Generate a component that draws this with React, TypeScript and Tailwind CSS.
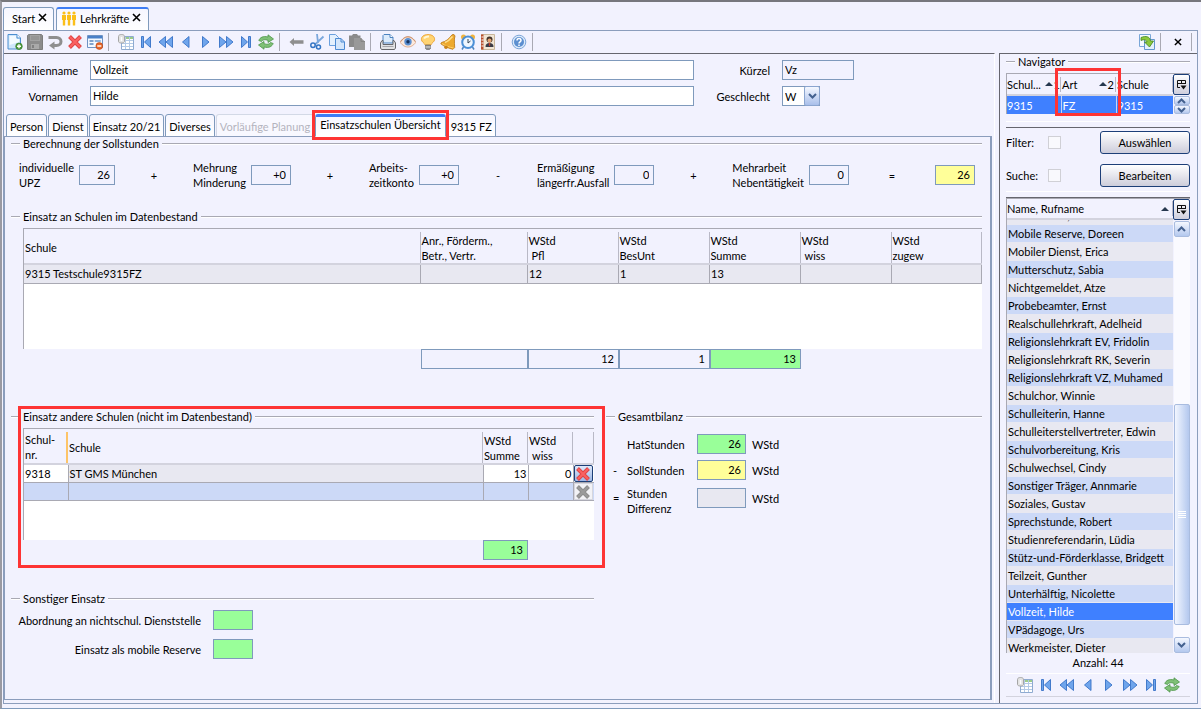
import React, { useState } from "react";

type IconProps = { className?: string };

const schools = [
  { schule: "9315 Testschule9315FZ", anr: "", pfl: "12", besUnt: "1", summe: "13", wiss: "", zugew: "" },
];

const people = [
  "Mobile Reserve, Doreen",
  "Mobiler Dienst, Erica",
  "Mutterschutz, Sabia",
  "Nichtgemeldet, Atze",
  "Probebeamter, Ernst",
  "Realschullehrkraft, Adelheid",
  "Religionslehrkraft EV, Fridolin",
  "Religionslehrkraft RK, Severin",
  "Religionslehrkraft VZ, Muhamed",
  "Schulchor, Winnie",
  "Schulleiterin, Hanne",
  "Schulleiterstellvertreter, Edwin",
  "Schulvorbereitung, Kris",
  "Schulwechsel, Cindy",
  "Sonstiger Träger, Annmarie",
  "Soziales, Gustav",
  "Sprechstunde, Robert",
  "Studienreferendarin, Lüdia",
  "Stütz-und-Förderklasse, Bridgett",
  "Teilzeit, Gunther",
  "Unterhälftig, Nicolette",
  "Vollzeit, Hilde",
  "VPädagoge, Urs",
];

/* ---------- icons ---------- */

function Svg({ children, className = "size-4" }: IconProps & { children: React.ReactNode }) {
  return (
    <svg viewBox="0 0 16 16" className={className} fill="none" aria-hidden="true">
      {children}
    </svg>
  );
}

function NewIcon() {
  return (
    <Svg>
      <path d="M1 .5h9l3.500 3.500v11H1z" fill="#cfe6fb" stroke="#4d8fd0" />
      <path d="M2.500 2h6.500v3h3v3L2.500 11z" fill="#f3faff" />
      <path d="M10 .5v3.500h3.500" fill="#fff" stroke="#4d8fd0" />
      <circle cx="12" cy="12.300" r="3.300" fill="#4f9a3d" stroke="#2f7a28" strokeWidth=".6" />
      <path d="M12 10.300v4M10 12.300h4" stroke="#fff" strokeWidth="1.400" />
    </Svg>
  );
}

function SaveIcon() {
  return (
    <Svg>
      <path d="M1.500.5h13l1 1v14H.5v-14z" fill="#8c8c8c" stroke="#7d7d7d" />
      <path d="M3 1h10v6H3z" fill="#a2a2a2" />
      <path d="M4 3h8M4 5h8" stroke="#8a8a8a" />
      <path d="M4 10h8v5H4z" fill="#a9a9a9" />
      <path d="M5 11h2v3H5z" fill="#808080" />
    </Svg>
  );
}

function UndoIcon() {
  return (
    <Svg>
      <path d="M1.500 3.500h8c6 0 6 8 0 8H6" stroke="#8f8f8f" strokeWidth="3" />
      <path d="M7.500 7.500v8L2 11.500z" fill="#8f8f8f" />
    </Svg>
  );
}

function DeleteIcon({ gray = false }: { gray?: boolean }) {
  return (
    <Svg>
      <path d="M2.500 2.500l11 11M13.500 2.500l-11 11" stroke={gray ? "#8d8d8d" : "#e04444"} strokeWidth="4" />
      <path d="M3 3l10 10M13 3L3 13" stroke={gray ? "#9b9b9b" : "#fb6161"} strokeWidth="2" />
    </Svg>
  );
}

function FormIcon() {
  return (
    <Svg>
      <path d="M.5 1.500h15v12H.5z" fill="#f4f9ff" stroke="#6f93c4" />
      <path d="M1 2h14v2.500H1z" fill="#4a80c8" />
      <path d="M2.500 7h4M2.500 10h4" stroke="#5b86bd" strokeWidth="1.400" />
      <path d="M8 6.500h5.500v1H8z" stroke="#8fb0d8" />
      <circle cx="12.300" cy="12" r="3.400" fill="#e8682b" stroke="#b9400f" strokeWidth=".6" />
      <path d="M10.300 12h4" stroke="#fff" strokeWidth="1.400" />
    </Svg>
  );
}

function TableIcon() {
  return (
    <Svg>
      <path d="M3.500 2.500h12v13h-12z" fill="#fff" stroke="#8fabd0" />
      <path d="M8 3h7v2H8z" fill="#9ccb8a" />
      <path d="M4 6.500h11M4 9.500h11M4 12.500h11M7.500 3v12M11.500 3v12" stroke="#b4cae6" />
      <path d="M.5 2.500C.5 1 2 .5 3.500.5S6.500 1 6.500 2.500v5c0 1-1.500 1.500-3 1.500s-3-.5-3-1.500z" fill="#e2e2e2" stroke="#a5a5a5" />
      <path d="M3.500 3v4" stroke="#fff" strokeWidth="1.500" />
    </Svg>
  );
}

const blueStroke = { fill: "#6fa5ec", stroke: "#3571c6", strokeWidth: 0.9 };

function FirstIcon() {
  return (
    <Svg>
      <path d="M3.500 2.500h2v11h-2z" {...blueStroke} />
      <path d="M12.500 2.500v11L6.500 8z" {...blueStroke} />
    </Svg>
  );
}

function RewindIcon() {
  return (
    <Svg>
      <path d="M7.500 2.500v11L1 8z" {...blueStroke} />
      <path d="M14.500 2.500v11L8 8z" {...blueStroke} />
    </Svg>
  );
}

function PrevIcon() {
  return (
    <Svg>
      <path d="M11 2.500v11L4.500 8z" {...blueStroke} />
    </Svg>
  );
}

function NextIcon() {
  return (
    <Svg>
      <path d="M4.500 2.500v11L11 8z" {...blueStroke} />
    </Svg>
  );
}

function ForwardIcon() {
  return (
    <Svg>
      <path d="M1.500 2.500v11L8 8z" {...blueStroke} />
      <path d="M8.500 2.500v11L15 8z" {...blueStroke} />
    </Svg>
  );
}

function LastIcon() {
  return (
    <Svg>
      <path d="M3.500 2.500v11l6-5.500z" {...blueStroke} />
      <path d="M10.500 2.500h2v11h-2z" {...blueStroke} />
    </Svg>
  );
}

function RefreshIcon() {
  return (
    <Svg>
      <path d="M.8 6.500C2 3.500 5 1.700 10 3V.8L15.500 5 10 8.500V6.300C7 5.300 4.500 5.500 3.500 7.500z" fill="#7fc077" stroke="#4c9648" strokeWidth=".8" />
      <path d="M15.200 9.500c-1.200 3-4.200 4.800-9.200 3.500v2.200L.5 11 6 7.500v2.200c3 1 5.500.8 6.500-1.200z" fill="#7fc077" stroke="#4c9648" strokeWidth=".8" />
    </Svg>
  );
}

function ArrowLeftIcon() {
  return (
    <Svg>
      <path d="M.5 8L5 4v2.300h9.500v3.400H5V12z" fill="#8f8f8f" />
    </Svg>
  );
}

function CutIcon() {
  return (
    <Svg>
      <path d="M8 0L9 9M14.500 2.500L6 10.500" stroke="#7aa7dc" strokeWidth="1.800" />
      <circle cx="4" cy="11.300" r="2.200" stroke="#3274c4" strokeWidth="1.500" />
      <circle cx="9.500" cy="13" r="2" stroke="#3274c4" strokeWidth="1.500" />
    </Svg>
  );
}

function CopyIcon() {
  return (
    <Svg>
      <path d="M.5.5h6l3 3v8h-9z" fill="#e4f0fd" stroke="#6ba0de" />
      <path d="M6.500 4.500h5.500l3.500 3.500v7.500h-9z" fill="#d4e6fb" stroke="#4d8ad2" />
      <path d="M12 4.500V8h3.500" stroke="#4d8ad2" />
    </Svg>
  );
}

function PasteIcon() {
  return (
    <Svg>
      <path d="M0 1.500h3L4 0h4l1 1.500h2.500V13H0z" fill="#8a8a8a" />
      <path d="M5 4h7l4 3.500V16H5z" fill="#999" />
      <path d="M12 4v3.500h4" stroke="#858585" />
    </Svg>
  );
}

function PrinterIcon() {
  return (
    <Svg>
      <path d="M4 .5h6l3 3V9H3V1.500z" fill="#dcebfb" stroke="#4c83c0" />
      <path d="M10 .5v3h3" fill="#fff" stroke="#4c83c0" />
      <path d="M3 6.500H2L.5 9v5l1 1.500h13l1-1.500V9L14 6.500h-1v4H3z" fill="#e2e2e4" stroke="#66666b" />
      <path d="M2.500 12.500h11" stroke="#a5a5ab" />
    </Svg>
  );
}

function EyeIcon() {
  return (
    <Svg>
      <path d="M.3 8.500C3 4 6 3 8 3s5 1 7.700 5.500C13 12 10.500 13 8 13S3 12 .3 8.500z" fill="#fbe9de" stroke="#d9a584" strokeWidth=".9" />
      <circle cx="8" cy="7.800" r="3.700" fill="#5a8fd2" />
      <circle cx="8" cy="7.800" r="1.700" fill="#17335f" />
      <path d="M.5 7.500C3.500 3.500 6 2.700 8 2.700s4.500.8 7.500 4.800" stroke="#c98b63" />
    </Svg>
  );
}

function BulbIcon() {
  return (
    <Svg>
      <path d="M8 .6c4.200 0 6.600 2 6.600 4.700 0 2.700-3.200 3.700-3.800 5.700H5.200C4.600 9 1.400 8 1.400 5.300 1.400 2.600 3.800.6 8 .6z" fill="#ffd473" stroke="#eda63a" />
      <path d="M4 4.500c1-1.700 3-2.200 5-2" stroke="#fff6d6" strokeWidth="2" />
      <path d="M5.500 11h5v3.500l-1 1h-3l-1-1z" fill="#8d8d8d" stroke="#5f5f5f" strokeWidth=".6" />
      <path d="M5.500 13h5" stroke="#dedede" />
    </Svg>
  );
}

function BellIcon() {
  return (
    <Svg>
      <path d="M12 .8l2-.3 1 1.500-.6 3c-.2 3 .3 6 .3 8.500L13 15.300C9 14.500 4 12.300.8 9.800l.7-1.300C6 7.500 9 5 12 .8z" fill="#eda92f" stroke="#b97512" strokeWidth=".8" />
      <path d="M5 8.500c3-1 5.500-3.500 7.500-6" stroke="#ffdf8c" strokeWidth="1.500" />
      <path d="M2 9.500c3 2 7.500 3.800 11.500 4.500" stroke="#ffd06a" />
      <circle cx="6" cy="13.300" r="1.800" fill="#c98218" />
    </Svg>
  );
}

function ClockIcon() {
  return (
    <Svg>
      <path d="M3.500 13L2 15.500M12.500 13l1.500 2.500" stroke="#4b83bf" strokeWidth="1.500" />
      <circle cx="3.500" cy="3" r="2.500" fill="#eeb23e" />
      <circle cx="12.500" cy="3" r="2.500" fill="#eeb23e" />
      <circle cx="8" cy="8.300" r="5.800" fill="#eef6ff" stroke="#4b8fd6" strokeWidth="2" />
      <path d="M8 5v4l2.500-2" stroke="#345" />
    </Svg>
  );
}

function BookIcon() {
  return (
    <Svg>
      <path d="M1.500.5h13v15h-13z" fill="#f1e6d4" stroke="#c9b79b" />
      <path d="M1 .5h2.500v15H1z" fill="#b9502c" />
      <path d="M1.500 3h2M1.500 6h2M1.500 9h2M1.500 12h2" stroke="#fff" />
      <circle cx="9.500" cy="5.500" r="3" fill="#433429" />
      <circle cx="9.500" cy="6.500" r="2" fill="#e3a271" />
      <path d="M5.500 13c0-3 1.500-4 4-4s4 1 4 4z" fill="#3b3b45" />
      <path d="M9.500 9v3" stroke="#c43c2c" strokeWidth="1.200" />
    </Svg>
  );
}

function HelpIcon() {
  return (
    <Svg>
      <circle cx="8" cy="8" r="6.800" fill="#dceafa" stroke="#7ea6d8" />
      <circle cx="8" cy="8" r="5" fill="#5c8fd0" />
      <path d="M6 6.500c0-2.600 4-2.600 4 0 0 1.400-2 1.500-2 3M8 10.500V12" stroke="#fff" strokeWidth="1.500" />
    </Svg>
  );
}

function ExportIcon() {
  return (
    <Svg>
      <path d="M.5.5h11v12H.5z" fill="#f4faff" stroke="#79a6d8" />
      <path d="M5.500 5.500h10v10h-10z" fill="#e3f0fd" stroke="#6496ce" />
      <path d="M2 3.500c5-2 9-1 9.500 3.500h3l-4 6-5-5h2.500C7.500 6 5 5 2 6.500z" fill="#8cc83c" stroke="#3f8420" strokeWidth=".8" />
    </Svg>
  );
}

function PeopleIcon() {
  return (
    <svg viewBox="0 0 16 16" className="h-4 w-4" aria-hidden="true">
      {[3, 8, 13].map((x) => (
        <g key={x} fill="#fbbf1a">
          <circle cx={x} cy="2" r="1.600" />
          <path d={`M${x - 2} 4h4v5h-.8v5.500h-2.400V9h-.8z`} />
        </g>
      ))}
    </svg>
  );
}

function CloseIcon({ className = "size-[9px]" }: IconProps) {
  return (
    <svg viewBox="0 0 9 9" className={className} aria-hidden="true">
      <path d="M1 1l7 7M8 1L1 8" stroke="#000" strokeWidth="1.600" />
    </svg>
  );
}

function ColumnIcon() {
  return (
    <svg viewBox="0 0 11 11" className="size-[11px]" fill="none" aria-hidden="true">
      <path d="M4 8.500H1.500v-7h8V5M1 4.500h9M5.500 1v4" stroke="#111" />
      <path d="M4.500 6.500h6l-3 4z" fill="#111" />
    </svg>
  );
}

function Chevron({ up = false }: { up?: boolean }) {
  return (
    <svg viewBox="0 0 9 6" className="h-[6px] w-[9px] shrink-0" fill="none" aria-hidden="true">
      <path d={up ? "M1 5l3.500-3.500L8 5" : "M1 1l3.500 3.500L8 1"} stroke="#44618f" strokeWidth="2" />
    </svg>
  );
}

function SortMark() {
  return (
    <svg viewBox="0 0 8 4" className="h-1 w-2 shrink-0" aria-hidden="true">
      <path d="M0 4l4-4 4 4z" fill="#26384f" />
    </svg>
  );
}

/* ---------- building blocks ---------- */

function ToolButton({ label, children, wide = false }: { label: string; children: React.ReactNode; wide?: boolean }) {
  return (
    <button
      type="button"
      aria-label={label}
      className={wide ? "flex h-5 w-[21px] items-center justify-center" : "flex h-5 w-5 items-center justify-center"}
    >
      {children}
    </button>
  );
}

function Separator() {
  return (
    <div className="h-[18px] w-[11px] pl-[3px]">
      <div className="h-full w-px bg-[#a9a9b3]" />
    </div>
  );
}

function GroupTitle({ children, className = "" }: { children: React.ReactNode; className?: string }) {
  return (
    <div className={"flex h-[13px] items-center " + className}>
      <div className="h-[2px] w-[9px] border-t border-[#a9a9b3] bg-white" />
      <h2 className="px-[3px]">{children}</h2>
      <div className="h-[2px] flex-1 border-t border-[#a9a9b3] bg-white" />
    </div>
  );
}

const numberInput = "h-5 border border-[#7f9abc] px-1 pb-[2px] text-right outline-none ";

function NumberBox({ label, value, className }: { label: string; value: string; className: string }) {
  return <input aria-label={label} defaultValue={value} className={numberInput + className} />;
}

function HoursField({ lines, value, className }: { lines: string[]; value: string; className: string }) {
  return (
    <label className="flex items-center gap-[5px]">
      <span className="whitespace-nowrap">
        {lines[0]}
        <br />
        {lines[1]}
      </span>
      <input defaultValue={value} className={numberInput + className} />
    </label>
  );
}

function Operator({ children, className = "" }: { children: React.ReactNode; className?: string }) {
  return <span className={"w-2 text-center " + className}>{children}</span>;
}

function HeadCell({ lines, indent = false }: { lines: string[]; indent?: boolean }) {
  return (
    <th className="p-0 text-left align-bottom font-normal">
      <div className="flex h-[31px] flex-col justify-center border-r border-[#b9b9c6] pl-px leading-[15px]">
        <div>{lines[0]}</div>
        {lines[1] && <div className={indent ? "pl-[3px]" : ""}>{lines[1]}</div>}
      </div>
    </th>
  );
}

function ScrollButton({ up = false, small = false }: { up?: boolean; small?: boolean }) {
  return (
    <button
      type="button"
      aria-label={up ? "Nach oben" : "Nach unten"}
      className={
        "flex w-4 shrink-0 items-center justify-center rounded-[2px] border border-[#a9bcdf] bg-linear-to-b from-[#f5f8ff] to-[#b4c8ee] " +
        (small ? "h-[9px]" : "h-4")
      }
    >
      <Chevron up={up} />
    </button>
  );
}

function ColumnButton() {
  return (
    <button
      type="button"
      aria-label="Spalten"
      className="flex h-[21px] w-[17px] items-center justify-center rounded-[2px] border border-[#1d3f78] bg-linear-to-b from-white to-[#cfcfdd]"
    >
      <ColumnIcon />
    </button>
  );
}

function RecordNav({ wide = false }: { wide?: boolean }) {
  return (
    <>
      <ToolButton wide={wide} label="Liste"><TableIcon /></ToolButton>
      <ToolButton wide={wide} label="Erster"><FirstIcon /></ToolButton>
      <ToolButton wide={wide} label="Zurückspulen"><RewindIcon /></ToolButton>
      <ToolButton wide={wide} label="Zurück"><PrevIcon /></ToolButton>
      <ToolButton wide={wide} label="Weiter"><NextIcon /></ToolButton>
      <ToolButton wide={wide} label="Vorspulen"><ForwardIcon /></ToolButton>
      <ToolButton wide={wide} label="Letzter"><LastIcon /></ToolButton>
      <ToolButton wide={wide} label="Aktualisieren"><RefreshIcon /></ToolButton>
    </>
  );
}

/* ---------- page parts ---------- */

function WindowTabs() {
  return (
    <div className="flex h-[27px] items-end gap-[2px] pt-1">
      <div className="flex h-[23px] w-[51px] items-center gap-[3px] rounded-t-[3px] border border-b-0 border-[#7f9abc] bg-linear-to-b from-[#f6f6ff] to-white pb-px pl-2">
        <span>Start</span>
        <button type="button" aria-label="Start schließen" className="pb-[2px]"><CloseIcon /></button>
      </div>
      <div className="-mb-px flex h-6 w-[93px] items-center gap-[3px] rounded-t-[3px] border border-t-2 border-b-0 border-[#7f9abc] border-t-[#3d7cf5] bg-linear-to-b from-[#f6f6ff] to-white pb-[3px] pl-1">
        <PeopleIcon />
        <span>Lehrkräfte</span>
        <button type="button" aria-label="Lehrkräfte schließen" className="pb-[2px]"><CloseIcon /></button>
      </div>
    </div>
  );
}

function Toolbar() {
  return (
    <div className="flex h-[22px] items-center pl-px">
      <ToolButton label="Neu"><NewIcon /></ToolButton>
      <ToolButton label="Speichern"><SaveIcon /></ToolButton>
      <ToolButton label="Rückgängig"><UndoIcon /></ToolButton>
      <ToolButton label="Löschen"><DeleteIcon /></ToolButton>
      <ToolButton label="Formular"><FormIcon /></ToolButton>
      <Separator />
      <RecordNav />
      <Separator />
      <ToolButton label="Vorheriges"><ArrowLeftIcon /></ToolButton>
      <ToolButton label="Ausschneiden"><CutIcon /></ToolButton>
      <ToolButton label="Kopieren"><CopyIcon /></ToolButton>
      <ToolButton label="Einfügen"><PasteIcon /></ToolButton>
      <Separator />
      <ToolButton label="Drucken"><PrinterIcon /></ToolButton>
      <ToolButton label="Vorschau"><EyeIcon /></ToolButton>
      <ToolButton label="Hinweis"><BulbIcon /></ToolButton>
      <ToolButton label="Erinnerung"><BellIcon /></ToolButton>
      <ToolButton label="Termine"><ClockIcon /></ToolButton>
      <ToolButton label="Adressbuch"><BookIcon /></ToolButton>
      <Separator />
      <ToolButton label="Hilfe"><HelpIcon /></ToolButton>
      <Separator />
      <div className="ml-auto flex items-center pr-[5px]">
        <ToolButton label="Exportieren"><ExportIcon /></ToolButton>
        <Separator />
        <button type="button" aria-label="Schließen" className="mr-[3px] flex h-5 w-5 items-center justify-center">
          <CloseIcon className="size-2" />
        </button>
        <div className="h-[18px] w-px bg-[#a9a9b3]" />
      </div>
    </div>
  );
}

function PersonForm() {
  const input = "h-5 border border-[#7f9abc] px-[2px] pb-[2px] outline-none";
  return (
    <div className="flex pt-[6px]">
      <div className="flex flex-1 flex-col gap-[6px]">
        <div className="flex items-center">
          <label htmlFor="familienname" className="w-[74px] text-right">Familienname</label>
          <input id="familienname" defaultValue="Vollzeit" className={input + " ml-3 flex-1 bg-white"} />
        </div>
        <div className="flex items-center">
          <label htmlFor="vornamen" className="w-[74px] text-right">Vornamen</label>
          <input id="vornamen" defaultValue="Hilde" className={input + " ml-3 flex-1 bg-white"} />
        </div>
      </div>
      <div className="flex w-[298px] flex-col gap-[6px]">
        <div className="flex items-center">
          <label htmlFor="kuerzel" className="w-[76px] text-right">Kürzel</label>
          <input id="kuerzel" defaultValue="Vz" className={input + " ml-3 w-[72px] bg-transparent"} />
        </div>
        <div className="flex items-center">
          <label htmlFor="geschlecht" className="w-[76px] text-right">Geschlecht</label>
          <div className="relative ml-3">
            <select id="geschlecht" defaultValue="W" className="block h-5 w-[38px] appearance-none border border-[#7f9abc] bg-white pl-[2px] outline-none">
              <option>W</option>
              <option>M</option>
            </select>
            <div className="pointer-events-none absolute top-0 right-0 flex h-5 w-4 items-center justify-center rounded-[2px] border border-[#8ba5cf] bg-linear-to-b from-[#f5f8ff] to-[#a9bfea]">
              <Chevron />
            </div>
          </div>
        </div>
      </div>
    </div>
  );
}

function DetailTabs({ active, onSelect }: { active: string; onSelect: (tab: string) => void }) {
  const tabs = ["Person", "Dienst", "Einsatz 20/21", "Diverses", "Vorläufige Planung", "Einsatzschulen Übersicht", "9315 FZ"];
  return (
    <div role="tablist" className="-mb-px flex h-[23px] items-end gap-px pl-[2px]">
      {tabs.map((tab) => {
        const disabled = tab === "Vorläufige Planung";
        const button = (
          <button
            key={tab}
            type="button"
            role="tab"
            aria-selected={tab === active}
            disabled={disabled}
            onClick={() => onSelect(tab)}
            className={
              "h-[23px] rounded-t-[3px] border whitespace-nowrap " +
              (tab === active
                ? "border-t-[3px] border-b-white border-x-[#7f9abc] border-t-[#3d7cf5] bg-linear-to-b from-[#f6f6ff] to-white px-1 pb-1"
                : disabled
                  ? "border-[#d3d9e6] border-b-[#7f9abc] bg-[#f8f8ff] px-[3px] pt-[2px] text-[#b4b4be]"
                  : "border-[#7f9abc] bg-linear-to-b from-[#f6f6ff] to-white px-[3px] pt-[2px]")
            }
          >
            {tab}
          </button>
        );
        if (tab !== "Einsatzschulen Übersicht") return button;
        return (
          <div key={tab} className="relative">
            {button}
            <div className="pointer-events-none absolute -inset-x-[3px] -top-1 -bottom-[3px] z-10 border-[3px] border-[#fe3434]" />
          </div>
        );
      })}
    </div>
  );
}

function TargetHours() {
  return (
    <section>
      <GroupTitle>Berechnung der Sollstunden</GroupTitle>
      <div className="mt-[10px] flex items-center justify-between pr-[7px] pl-2 leading-[15px]">
        <HoursField lines={["individuelle", "UPZ"]} value="26" className="w-9" />
        <Operator>+</Operator>
        <HoursField lines={["Mehrung", "Minderung"]} value="+0" className="w-10" />
        <Operator>+</Operator>
        <HoursField lines={["Arbeits-", "zeitkonto"]} value="+0" className="w-10" />
        <Operator>-</Operator>
        <HoursField lines={["Ermäßigung", "längerfr.Ausfall"]} value="0" className="w-10" />
        <Operator>+</Operator>
        <HoursField lines={["Mehrarbeit", "Nebentätigkeit"]} value="0" className="w-10" />
        <Operator className="mx-1">=</Operator>
        <NumberBox label="Sollstunden" value="26" className="w-10 bg-[#ffff99]" />
      </div>
    </section>
  );
}

function SchoolsInStock() {
  const cell = "h-[19px] border-r border-b border-[#a9a9b3] py-0 px-px";
  return (
    <section>
      <GroupTitle className="mt-5">Einsatz an Schulen im Datenbestand</GroupTitle>
      <div className="mt-[5px] ml-3 h-[121px] border-t border-l border-[#a9a9b3] bg-white">
        <table className="w-full table-fixed border-collapse">
          <colgroup>
            <col />
            <col className="w-[107px]" />
            <col className="w-[91px]" />
            <col className="w-[91px]" />
            <col className="w-[91px]" />
            <col className="w-[91px]" />
            <col className="w-[90px]" />
          </colgroup>
          <thead>
            <tr className="h-[35px] border-b-2 border-[#d3d3de] bg-[#f2f2fe]">
              <HeadCell lines={["Schule"]} />
              <HeadCell lines={["Anr., Förderm.,", "Betr., Vertr."]} />
              <HeadCell lines={["WStd", "Pfl"]} indent />
              <HeadCell lines={["WStd", "BesUnt"]} />
              <HeadCell lines={["WStd", "Summe"]} />
              <HeadCell lines={["WStd", "wiss"]} indent />
              <HeadCell lines={["WStd", "zugew"]} />
            </tr>
          </thead>
          <tbody>
            {schools.map((s) => (
              <tr key={s.schule} className="bg-[#e8e8f1]">
                <td className={cell}>{s.schule}</td>
                <td className={cell}>{s.anr}</td>
                <td className={cell}>{s.pfl}</td>
                <td className={cell}>{s.besUnt}</td>
                <td className={cell}>{s.summe}</td>
                <td className={cell}>{s.wiss}</td>
                <td className={cell}>{s.zugew}</td>
              </tr>
            ))}
          </tbody>
        </table>
      </div>
      <div className="flex justify-end pr-[181px]">
        <NumberBox label="Summe Anrechnungen" value="" className="w-[107px]" />
        <NumberBox label="Summe Pflicht" value="12" className="w-[91px]" />
        <NumberBox label="Summe BesUnt" value="1" className="w-[91px]" />
        <NumberBox label="Gesamtsumme" value="13" className="w-[91px] bg-[#99ff99]" />
      </div>
    </section>
  );
}

function OtherSchools() {
  const cell = "h-[18px] border-r border-b border-[#a9a9b3] py-0 px-px";
  return (
    <section className="relative">
      <GroupTitle>Einsatz andere Schulen (nicht im Datenbestand)</GroupTitle>
      <div className="mt-[5px] ml-3 h-[112px] border-t border-l border-[#a9a9b3] bg-white">
        <table className="w-full table-fixed border-collapse">
          <colgroup>
            <col className="w-11" />
            <col />
            <col className="w-[45px]" />
            <col className="w-[45px]" />
            <col className="w-[21px]" />
          </colgroup>
          <thead>
            <tr className="h-[35px] border-b-2 border-[#d3d3de] bg-[#f2f2fe]">
              <th className="p-0 text-left align-bottom font-normal">
                <div className="h-[31px] border-r-2 border-[#fdc468] pl-px leading-[15px]">
                  Schul-
                  <br />
                  nr.
                </div>
              </th>
              <HeadCell lines={["Schule"]} />
              <HeadCell lines={["WStd", "Summe"]} />
              <HeadCell lines={["WStd", "wiss"]} indent />
              <HeadCell lines={[""]} />
            </tr>
          </thead>
          <tbody>
            <tr>
              <td className={cell}>9318</td>
              <td className={cell + " bg-[#e8e8f1]"}>ST GMS München</td>
              <td className={cell + " text-right"}>13</td>
              <td className={cell + " text-right"}>0</td>
              <td className="h-[18px] border-b border-[#a9a9b3] p-0">
                <button type="button" aria-label="Zeile löschen" className="flex h-[17px] w-[19px] items-center justify-center rounded-[2px] border border-[#1d3f78] bg-linear-to-b from-[#dfe9fb] to-[#9db6e4]">
                  <DeleteIcon />
                </button>
              </td>
            </tr>
            <tr className="bg-[#ccd9f7]">
              <td className={cell} />
              <td className={cell} />
              <td className={cell} />
              <td className={cell} />
              <td className="h-[18px] border-b border-[#a9a9b3] p-0">
                <button type="button" disabled aria-label="Leere Zeile löschen" className="flex h-[17px] w-[19px] items-center justify-center border border-[#d6d6de] bg-[#f2f2f6]">
                  <DeleteIcon gray />
                </button>
              </td>
            </tr>
          </tbody>
        </table>
      </div>
      <div className="flex justify-end pr-[66px]">
        <NumberBox label="Summe andere Schulen" value="13" className="w-[45px] bg-[#99ff99]" />
      </div>
      <div className="pointer-events-none absolute -top-1 -right-[11px] -bottom-2 left-[7px] z-10 border-[3px] border-[#fe3434]" />
    </section>
  );
}

function MiscAssignment() {
  const box = numberInput + "w-10 bg-[#99ff99]";
  return (
    <section className="mt-8">
      <GroupTitle>Sonstiger Einsatz</GroupTitle>
      <div className="mt-[5px] flex flex-col gap-[9px]">
        <label className="flex items-center gap-3">
          <span className="w-[190px] text-right whitespace-nowrap">Abordnung an nichtschul. Dienststelle</span>
          <input className={box} />
        </label>
        <label className="flex items-center gap-3">
          <span className="w-[190px] text-right whitespace-nowrap">Einsatz als mobile Reserve</span>
          <input className={box} />
        </label>
      </div>
    </section>
  );
}

function Balance() {
  return (
    <section className="leading-[15px]">
      <GroupTitle>Gesamtbilanz</GroupTitle>
      <div className="mt-[11px] flex flex-col gap-[6px] pl-[7px]">
        <div className="flex items-center">
          <span className="w-[14px]" />
          <span className="w-[70px]">HatStunden</span>
          <NumberBox label="HatStunden" value="26" className="w-[49px] bg-[#99ff99]" />
          <span className="pl-[6px]">WStd</span>
        </div>
        <div className="flex items-center">
          <span className="w-[14px]">-</span>
          <span className="w-[70px]">SollStunden</span>
          <NumberBox label="SollStunden" value="26" className="w-[49px] bg-[#ffff99]" />
          <span className="pl-[6px]">WStd</span>
        </div>
        <div className="flex items-start">
          <span className="w-[14px] leading-6">=</span>
          <span className="w-[70px]">
            Stunden
            <br />
            Differenz
          </span>
          <div className="flex h-6 items-center">
            <NumberBox label="Stunden Differenz" value="" className="w-[49px] bg-[#e8e8f1]" />
            <span className="pl-[6px]">WStd</span>
          </div>
        </div>
      </div>
    </section>
  );
}

function Navigator() {
  return (
    <section>
      <GroupTitle>Navigator</GroupTitle>
      <div className="relative mt-[5px] flex border-t border-l border-[#a9a9b3]">
        <table className="flex-1 table-fixed border-collapse">
          <colgroup>
            <col className="w-[54px]" />
            <col className="w-[55px]" />
            <col />
          </colgroup>
          <thead>
            <tr className="h-[21px] border-b-2 border-[#d3d3de]">
              <th className="p-0 text-left font-normal">
                <div className="flex items-center justify-between border-r border-[#b9b9c6]">
                  Schul...
                  <span className="flex items-center gap-px"><SortMark />1</span>
                </div>
              </th>
              <th className="p-0 text-left font-normal">
                <div className="flex items-center justify-between border-r border-[#b9b9c6] pr-px pl-px">
                  Art
                  <span className="flex items-center gap-px"><SortMark />2</span>
                </div>
              </th>
              <th className="p-0 text-left font-normal">
                <div className="border-r border-[#b9b9c6] pl-px">Schule</div>
              </th>
            </tr>
          </thead>
          <tbody>
            <tr className="h-[18px] bg-[#3f80ff] text-white">
              <td className="border-r border-[#c5d4f5] p-0">9315</td>
              <td className="border-r border-[#c5d4f5] p-0 pl-px">FZ</td>
              <td className="p-0 pl-px">9315</td>
            </tr>
          </tbody>
        </table>
        <div className="flex flex-col items-center">
          <ColumnButton />
          <div className="mt-px flex flex-col">
            <ScrollButton up small />
            <ScrollButton small />
          </div>
        </div>
        <div className="pointer-events-none absolute -top-[6px] left-[48px] z-10 h-12 w-[66px] border-[3px] border-[#fe3434]" />
      </div>
      <div className="mt-[7px] h-px bg-white" />
    </section>
  );
}

function FilterBox() {
  const check = "size-[13px] appearance-none border border-[#d0d0d6] bg-[#f9f9fd]";
  const button =
    "ml-auto h-[23px] w-[90px] rounded-[3px] border border-[#1d3f78] bg-linear-to-b from-white to-[#cdcddb]";
  return (
    <section className="mt-[5px] border-t border-[#66666e] pt-[3px]">
      <div className="flex items-center">
        <label htmlFor="filter" className="w-[42px]">Filter:</label>
        <input id="filter" type="checkbox" className={check} />
        <button type="button" className={button}>Auswählen</button>
      </div>
      <div className="mt-[10px] flex items-center">
        <label htmlFor="suche" className="w-[42px]">Suche:</label>
        <input id="suche" type="checkbox" className={check} />
        <button type="button" className={button}>Bearbeiten</button>
      </div>
      <div className="mt-1 h-px bg-white" />
    </section>
  );
}

function PeopleList() {
  const [selected, setSelected] = useState("Vollzeit, Hilde");
  return (
    <section className="mt-[5px] border-t border-[#66666e]">
      <div className="flex border-t border-l border-[#a9a9b3]">
        <table className="flex-1 table-fixed border-separate border-spacing-0">
          <thead>
            <tr>
              <th className="h-[21px] border-b-2 border-[#d3d3de] p-0 text-left font-normal">
                <div className="flex items-center justify-between border-r border-[#b9b9c6] pr-[3px]">
                  Name, Rufname
                  <SortMark />
                </div>
              </th>
            </tr>
          </thead>
          <tbody className="bg-[#e8e8f1]">
            <tr>
              <td className="p-0">
                <div className="flex h-[5px] items-end overflow-hidden pl-px leading-[18px]">Mittelschule, Anna</div>
              </td>
            </tr>
            {people.map((name, i) => (
              <tr
                key={name}
                onClick={() => setSelected(name)}
                className={
                  name === selected ? "bg-[#3f80ff] text-white" : i % 2 === 0 ? "bg-[#ccd9f7]" : "bg-[#e8e8f1]"
                }
              >
                <td className="h-[18px] border-b border-[#e8e8f1] p-0 pl-px whitespace-nowrap">{name}</td>
              </tr>
            ))}
            <tr>
              <td className="p-0">
                <div className="h-[14px] overflow-hidden pl-px leading-[18px]">Werkmeister, Dieter</div>
              </td>
            </tr>
          </tbody>
        </table>
        <div className="flex flex-col items-center">
          <ColumnButton />
          <div className="mt-px flex w-4 flex-1 flex-col bg-[#fafaff]">
            <ScrollButton up />
            <div className="grow-[171]" />
            <div className="flex grow-[217] flex-col items-center justify-center gap-px rounded-[2px] border border-[#a9bcdf] bg-linear-to-r from-[#f2f6ff] to-[#b4c8ee]">
              <div className="h-px w-2 bg-white" />
              <div className="h-px w-2 bg-white" />
              <div className="h-px w-2 bg-white" />
              <div className="h-px w-2 bg-white" />
            </div>
            <div className="grow-[12]" />
            <ScrollButton />
          </div>
        </div>
      </div>
      <p className="pt-[2px] text-center">Anzahl: 44</p>
      <div className="mt-[3px] flex justify-center border-t border-b border-t-white border-b-[#d3d3de] py-px">
        <RecordNav wide />
      </div>
    </section>
  );
}

export default function App() {
  const [tab, setTab] = useState("Einsatzschulen Übersicht");
  return (
    <div className="flex min-h-screen flex-col border-t-2 border-b border-l-2 border-t-[#77777d] border-b-[#7f9abc] border-l-[#9a9aa2] bg-[#f2f2fe] pt-px pr-[3px] pb-1 pl-px font-[Lato,'Open_Sans',sans-serif] text-[11px] leading-[15px] text-black">
      <WindowTabs />
      <div className="flex flex-1 flex-col border border-[#8b9dbc]">
        <Toolbar />
        <div className="flex flex-1 gap-1">
          <main className="flex min-w-0 flex-1 flex-col border-t border-r border-t-[#66666e] border-r-white pr-[2px] pb-[3px]">
            <PersonForm />
            <div className="mt-2">
              <DetailTabs active={tab} onSelect={setTab} />
            </div>
            <div className="flex-1 border border-r-2 border-[#8b9dbc] pr-2 pl-[6px]">
              <TargetHours />
              <SchoolsInStock />
              <div className="mt-[41px] grid grid-cols-[583fr_376fr] gap-3">
                <div>
                  <OtherSchools />
                  <MiscAssignment />
                </div>
                <Balance />
              </div>
            </div>
          </main>
          <aside className="w-[198px] shrink-0 border-t border-l border-[#66666e] pt-px pr-[7px] pl-[6px]">
            <Navigator />
            <FilterBox />
            <PeopleList />
          </aside>
        </div>
      </div>
    </div>
  );
}
